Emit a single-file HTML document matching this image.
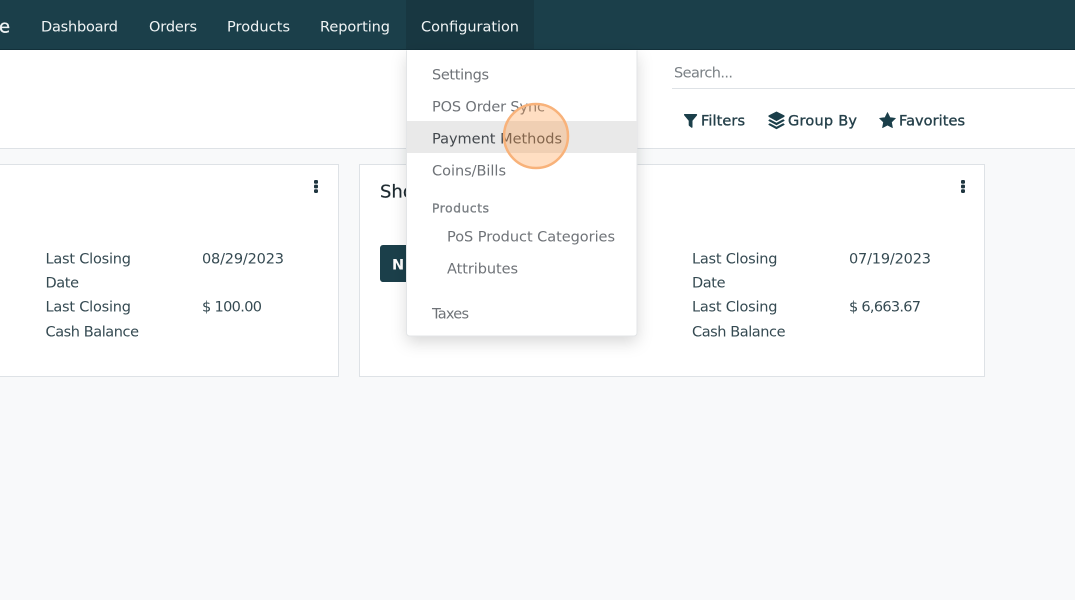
<!DOCTYPE html>
<html lang="en"><head><meta charset="utf-8"><title>Point of Sale</title>
<style>
html,body{margin:0;padding:0;width:1075px;height:600px;overflow:hidden;background:#f8f9fa}
svg{display:block;position:absolute;left:0;top:0}
text{font-family:"DejaVu Sans","Liberation Sans",sans-serif;font-size:14.5px;transform:translateY(-.5px)}
.n{fill:#f0f4f5}
.d{fill:#6f7378}
.b{fill:#354a52}
.t{fill:#25404a;stroke:#25404a;stroke-width:.35px;font-size:14.5px}
</style></head><body>
<svg width="1075" height="600" viewBox="0 0 1075 600" xmlns="http://www.w3.org/2000/svg">
<defs>
<filter id="sh" x="-20%" y="-20%" width="140%" height="140%"><feDropShadow dx="0" dy="6" stdDeviation="8" flood-color="#000" flood-opacity=".16"/></filter>
</defs>
<rect width="1075" height="600" fill="#f8f9fa"/>
<!-- control panel -->
<rect x="0" y="50" width="1075" height="98" fill="#fff"/>
<rect x="0" y="148" width="1075" height="1" fill="#dee2e6"/>
<!-- nav -->
<rect x="0" y="0" width="1075" height="50" fill="#1b3f4a"/>
<rect x="406" y="0" width="128" height="50" fill="#183741"/>
<rect x="0" y="49" width="1075" height="1" fill="#12303a"/>
<text class="n" x="-1" y="33" style="font-size:18px;stroke:#eef3f4;stroke-width:.3px">e</text>
<text class="n" x="41" y="32" textLength="77">Dashboard</text>
<text class="n" x="149" y="32" textLength="48">Orders</text>
<text class="n" x="227" y="32" textLength="63">Products</text>
<text class="n" x="320" y="32" textLength="70">Reporting</text>
<text class="n" x="421" y="32" textLength="98">Configuration</text>
<!-- search -->
<text x="674" y="78" textLength="59" fill="#7a8085">Search...</text>
<rect x="672" y="88" width="403" height="1" fill="#dee2e6"/>
<!-- toolbar -->
<path d="M684.300 114h12c.8 0 1.100.9.600 1.500l-4.400 5.200v6.300c0 .7-.7 1-1.200.6l-2.300-1.900c-.2-.2-.3-.4-.3-.6v-4.400l-4.400-5.200c-.5-.6-.2-1.500 0-1.500z" fill="#1b3f4a"/>
<text class="t" x="701" y="126" textLength="44">Filters</text>
<path d="M776.500 111.500l8 4v1.300l-8 4.300-8-4.300v-1.300z" fill="#1b3f4a"/>
<path d="M769.800 119.300l6.700 3.500 6.700-3.500 1.300.8v.8l-8 4.300-8-4.300v-.8z" fill="#1b3f4a"/>
<path d="M769.800 123.300l6.700 3.500 6.700-3.500 1.300.8v.8l-8 4.300-8-4.300v-.8z" fill="#1b3f4a"/>
<text class="t" x="788" y="126" textLength="69">Group By</text>
<path d="M887.500 112.500l2.500 5 5.500.8-4 3.900 1 5.500-5-2.600-5 2.600 1-5.500-4-3.900 5.500-.8z" fill="#1b3f4a" stroke="#1b3f4a" stroke-width=".6" stroke-linejoin="round"/>
<text class="t" x="899" y="126" textLength="66">Favorites</text>
<!-- left card -->
<rect x="-10" y="164.500" width="348.500" height="212" fill="#fff" stroke="#dee2e6"/>
<rect x="314" y="180" width="4" height="3.800" rx="1.200" fill="#1f3640"/><rect x="314" y="184.600" width="4" height="3.800" rx="1.200" fill="#1f3640"/><rect x="314" y="189.200" width="4" height="3.800" rx="1.200" fill="#1f3640"/>
<text class="b" x="45.500" y="264" textLength="85.500">Last Closing</text>
<text class="b" x="45.500" y="288" textLength="33.500">Date</text>
<text class="b" x="45.500" y="312" textLength="85.500">Last Closing</text>
<text class="b" x="45.500" y="337" textLength="93.500">Cash Balance</text>
<text class="b" x="202" y="264" textLength="82">08/29/2023</text>
<text class="b" x="202" y="312" textLength="60">$ 100.00</text>
<!-- right card -->
<rect x="359.500" y="164.500" width="625" height="212" fill="#fff" stroke="#dee2e6"/>
<rect x="961" y="180" width="4" height="3.800" rx="1.200" fill="#1f3640"/><rect x="961" y="184.600" width="4" height="3.800" rx="1.200" fill="#1f3640"/><rect x="961" y="189.200" width="4" height="3.800" rx="1.200" fill="#1f3640"/>
<text x="380" y="198" style="font-size:18px;stroke:#1d2a30;stroke-width:.2px" fill="#1d2a30">Shop</text>
<rect x="380" y="245" width="50" height="37" rx="3" fill="#1b3f4a"/>
<text x="392" y="270" textLength="44" style="font-size:14.500px;font-weight:bold" fill="#fff">New</text>
<text class="b" x="692" y="264" textLength="85.500">Last Closing</text>
<text class="b" x="692" y="288" textLength="33.500">Date</text>
<text class="b" x="692" y="312" textLength="85.500">Last Closing</text>
<text class="b" x="692" y="337" textLength="93.500">Cash Balance</text>
<text class="b" x="849" y="264" textLength="82">07/19/2023</text>
<text class="b" x="849" y="312" textLength="72">$ 6,663.67</text>
<!-- dropdown -->
<path d="M407 50H637V333a3 3 0 0 1-3 3H410a3 3 0 0 1-3-3z" fill="#fff" filter="url(#sh)"/>
<path d="M406.500 50.500V333a3 3 0 0 0 3 3H634a3 3 0 0 0 3-3V50.500" fill="#fff" stroke="#e3e5e7" stroke-width="1"/>
<rect x="407" y="121" width="230" height="32" fill="#e9e9e9"/>
<text class="d" x="432" y="80" textLength="57">Settings</text>
<text class="d" x="432" y="112" textLength="113">POS Order Sync</text>
<text x="432" y="144" textLength="130" fill="#43484d">Payment Methods</text>
<text class="d" x="432" y="176" textLength="74">Coins/Bills</text>
<text x="432" y="213" textLength="57" style="font-size:12.200px;stroke:#7a7f84;stroke-width:.35px" fill="#7a7f84">Products</text>
<text class="d" x="447" y="242" textLength="168">PoS Product Categories</text>
<text class="d" x="447" y="274" textLength="71">Attributes</text>
<text class="d" x="432" y="319" textLength="37">Taxes</text>
<!-- click highlight -->
<circle cx="536" cy="136" r="32" fill="#ff9d4d" fill-opacity=".34" stroke="#f8b27a" stroke-width="2.500"/>
</svg>
</body></html>
